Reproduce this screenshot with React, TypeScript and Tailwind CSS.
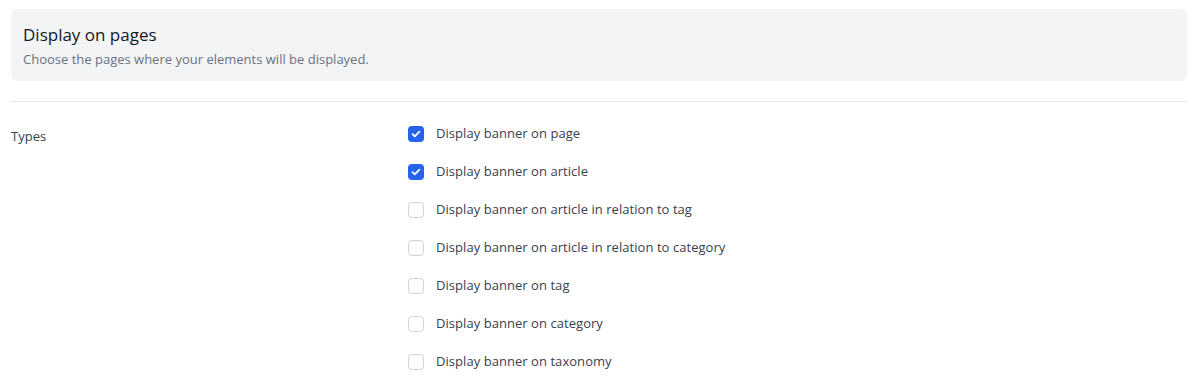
import { useState } from "react";

const options = [
  { id: "page", label: "Display banner on page", checked: true },
  { id: "article", label: "Display banner on article", checked: true },
  { id: "article-tag", label: "Display banner on article in relation to tag", checked: false },
  { id: "article-category", label: "Display banner on article in relation to category", checked: false },
  { id: "tag", label: "Display banner on tag", checked: false },
  { id: "category", label: "Display banner on category", checked: false },
  { id: "taxonomy", label: "Display banner on taxonomy", checked: false },
];

export default function App() {
  const [values, setValues] = useState<Record<string, boolean>>(
    Object.fromEntries(options.map((o) => [o.id, o.checked]))
  );

  return (
    <div className="min-h-screen bg-white pl-[11px] pr-[14px] pt-[9px] font-['Segoe_UI','Open_Sans',sans-serif]">
      <div className="rounded-md bg-[#f3f4f6] px-3 pt-[14px] pb-[13px]">
        <h2 className="text-[17px] leading-[24px] text-[#111827]">Display on pages</h2>
        <p className="mt-[3px] text-[13px] leading-[18px] text-[#6b7280]">Choose the pages where your elements will be displayed.</p>
      </div>

      <div className="mt-5 border-t border-[#e5e7eb]" />

      <div className="mt-[22px] flex">
        <div className="w-[397px] pt-[2px] text-[13px] leading-[20px] text-[#374151]">Types</div>
        <div className="flex flex-col gap-[18px]">
          {options.map((o) => (
            <label key={o.id} className="flex h-5 items-center gap-3 text-[13px] tracking-[0.05px] text-[#374151]">
              <button
                type="button"
                onClick={() => setValues({ ...values, [o.id]: !values[o.id] })}
                className={
                  values[o.id]
                    ? "flex size-4 items-center justify-center rounded-[4px] bg-[#2563eb]"
                    : "size-4 rounded-[4px] border border-[#d1d5db] bg-white"
                }
              >
                {values[o.id] && (
                  <svg viewBox="0 0 16 16" className="size-4" fill="none">
                    <path d="M4.6 8.2l2.2 2.2 4.6-4.8" stroke="white" strokeWidth="1.8" strokeLinecap="round" strokeLinejoin="round" />
                  </svg>
                )}
              </button>
              <span>{o.label}</span>
            </label>
          ))}
        </div>
      </div>
    </div>
  );
}
